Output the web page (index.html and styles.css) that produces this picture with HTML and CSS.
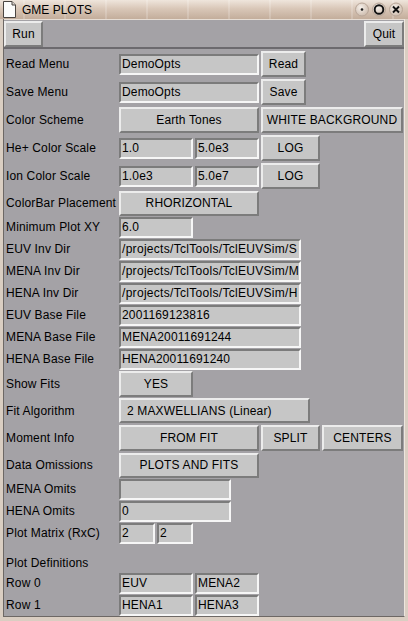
FILE: index.html
```html
<!DOCTYPE html>
<html lang="en">
<head>
    <meta charset="UTF-8">
    <title>GME PLOTS</title>
    <link rel="stylesheet" href="styles.css">
</head>
<body>
    <div class="window">
        <!-- Title bar -->
        <div class="titlebar">
            <svg class="app-icon" width="15" height="17" viewBox="0 0 15 17">
                <path d="M1.5 0.5 H10 L13.5 4 V16.5 H1.5 Z" fill="#fbfbfa" stroke="#4a4440"/>
                <path d="M10 0.5 V4 H13.5" fill="#dcd6d0" stroke="#4a4440"/>
            </svg>
            <span class="title">GME PLOTS</span>
            <svg class="wm-buttons" width="50" height="15" viewBox="0 0 50 15">
                <defs>
                    <radialGradient id="knob" cx="40%" cy="35%" r="70%">
                        <stop offset="0" stop-color="#f6f0ea"/>
                        <stop offset="1" stop-color="#cbb9aa"/>
                    </radialGradient>
                </defs>
                <circle cx="8" cy="7.5" r="6.5" fill="url(#knob)" stroke="#b8a698"/>
                <circle cx="8" cy="7.5" r="1.3" fill="#1a1a1a"/>
                <circle cx="25" cy="7.5" r="6.5" fill="url(#knob)" stroke="#b8a698"/>
                <circle cx="25" cy="7.5" r="4.3" fill="none" stroke="#111" stroke-width="1.9"/>
                <circle cx="42" cy="7.5" r="6.5" fill="url(#knob)" stroke="#b8a698"/>
                <path d="M39 4.5 L45 10.5 M45 4.5 L39 10.5" stroke="#111" stroke-width="1.9"/>
            </svg>
        </div>

        <div class="client">
            <!-- Toolbar -->
            <div class="toolbar">
                <button class="btn run">Run</button>
                <button class="btn quit">Quit</button>
            </div>

            <!-- Options form -->
            <div class="form">
                <div class="row tall">
                    <span class="label">Read Menu</span>
                    <div class="entry w140">DemoOpts</div>
                    <button class="btn w45">Read</button>
                </div>
                <div class="row tall">
                    <span class="label">Save Menu</span>
                    <div class="entry w140">DemoOpts</div>
                    <button class="btn w45">Save</button>
                </div>
                <div class="row tall">
                    <span class="label">Color Scheme</span>
                    <button class="btn w140">Earth Tones</button>
                    <button class="btn w142">WHITE BACKGROUND</button>
                </div>
                <div class="row tall">
                    <span class="label">He+ Color Scale</span>
                    <div class="entry w74">1.0</div>
                    <div class="entry w64">5.0e3</div>
                    <button class="btn w59">LOG</button>
                </div>
                <div class="row tall">
                    <span class="label">Ion Color Scale</span>
                    <div class="entry w74">1.0e3</div>
                    <div class="entry w64">5.0e7</div>
                    <button class="btn w59">LOG</button>
                </div>
                <div class="row h26">
                    <span class="label">ColorBar Placement</span>
                    <button class="btn short w140">RHORIZONTAL</button>
                </div>
                <div class="row">
                    <span class="label">Minimum Plot XY</span>
                    <div class="entry w74">6.0</div>
                </div>
                <div class="row">
                    <span class="label">EUV Inv Dir</span>
                    <div class="entry w182 path">/projects/TclTools/TclEUVSim/S</div>
                </div>
                <div class="row">
                    <span class="label">MENA Inv Dir</span>
                    <div class="entry w182 path">/projects/TclTools/TclEUVSim/M</div>
                </div>
                <div class="row">
                    <span class="label">HENA Inv Dir</span>
                    <div class="entry w182 path">/projects/TclTools/TclEUVSim/H</div>
                </div>
                <div class="row">
                    <span class="label">EUV Base File</span>
                    <div class="entry w182">2001169123816</div>
                </div>
                <div class="row">
                    <span class="label">MENA Base File</span>
                    <div class="entry w182">MENA20011691244</div>
                </div>
                <div class="row">
                    <span class="label">HENA Base File</span>
                    <div class="entry w182">HENA20011691240</div>
                </div>
                <div class="row h27">
                    <span class="label">Show Fits</span>
                    <button class="btn w74">YES</button>
                </div>
                <div class="row h27">
                    <span class="label">Fit Algorithm</span>
                    <button class="btn short w191 left">2 MAXWELLIANS (Linear)</button>
                </div>
                <div class="row tall">
                    <span class="label">Moment Info</span>
                    <button class="btn w140">FROM FIT</button>
                    <button class="btn w59">SPLIT</button>
                    <button class="btn w81">CENTERS</button>
                </div>
                <div class="row h26">
                    <span class="label">Data Omissions</span>
                    <button class="btn short w140">PLOTS AND FITS</button>
                </div>
                <div class="row">
                    <span class="label">MENA Omits</span>
                    <div class="entry w112"></div>
                </div>
                <div class="row">
                    <span class="label">HENA Omits</span>
                    <div class="entry w112">0</div>
                </div>
                <div class="row">
                    <span class="label">Plot Matrix (RxC)</span>
                    <div class="entry w36">2</div>
                    <div class="entry w36">2</div>
                </div>

                <div class="spacer"></div>
                <div class="row caption">
                    <span class="label">Plot Definitions</span>
                </div>
                <div class="row">
                    <span class="label">Row 0</span>
                    <div class="entry w74">EUV</div>
                    <div class="entry w64">MENA2</div>
                </div>
                <div class="row">
                    <span class="label">Row 1</span>
                    <div class="entry w74">HENA1</div>
                    <div class="entry w64">HENA3</div>
                </div>
            </div>
        </div>
    </div>
</body>
</html>
```

FILE: styles.css
```css
/* Global */
* {
    box-sizing: border-box;
}

html, body {
    margin: 0;
    padding: 0;
}

body {
    width: 408px;
    height: 621px;
    overflow: hidden;
    background: #dacec2; /* window frame */
    font-family: "Liberation Sans", Arial, sans-serif;
    font-size: 12px;
    letter-spacing: 0.15px;
    color: #000;
}

/* Title bar */
.titlebar {
    height: 19px;
    display: flex;
    align-items: center;
    padding-left: 2px;
    background:
        repeating-linear-gradient(90deg, rgba(255, 255, 255, 0) 0 23px, rgba(255, 255, 255, 0.18) 23px 25px, rgba(255, 255, 255, 0) 25px 41px),
        linear-gradient(#efe5dc, #d9c7b8 45%, #c3ad9b);
}

.app-icon {
    flex: none;
}

.title {
    margin-left: 5px;
    font-size: 12px;
    letter-spacing: 0;
}

.wm-buttons {
    margin-left: auto;
    margin-right: 4px;
}

/* Client area */
.client {
    margin: 0 3px;
    height: 598px;
    background: #a4a2a6;
    border-left: 1px solid #6d6865;
    border-right: 1px solid #eee6de;
    border-bottom: 1px solid #6d6865;
}

.toolbar {
    display: flex;
    justify-content: space-between;
    height: 30px;
    padding-top: 1px;
    border-top: 1px solid #e6ddd4;
    border-bottom: 2px solid #6c6a6e;
}

.toolbar .run {
    width: 39px;
}

.toolbar .quit {
    width: 40px;
}

/* Form rows */
.form {
    padding-top: 1px;
}

.row {
    display: flex;
    align-items: center;
    gap: 2px;
    height: 22px;
}

.row.tall {
    height: 28px;
}

.row.h27 {
    height: 27px;
}

.row.h26 {
    height: 26px;
}

.row.caption {
    height: 18px;
}

.spacer {
    height: 10px;
}

.label {
    flex: none;
    width: 113px;
    padding-left: 2px;
    white-space: nowrap;
}

/* Widgets */
.entry {
    flex: none;
    height: 21px;
    padding-left: 1px;
    line-height: 17px;
    background: #c6c6c6;
    border: 2px solid;
    border-color: #7b7b7b #f6f6f6 #f6f6f6 #7b7b7b;
    white-space: nowrap;
    overflow: hidden;
}

/* long directory paths scroll past the entry's right edge */
.entry.path {
    letter-spacing: 0.3px;
}

.btn {
    flex: none;
    height: 26px;
    padding: 0;
    font: inherit;
    letter-spacing: inherit;
    color: #000;
    text-align: center;
    background: #c6c6c6;
    border: 2px solid;
    border-color: #ececec #7c7c7c #7c7c7c #ececec;
    border-radius: 0;
}

.btn.short {
    height: 25px;
}

.btn.left {
    text-align: left;
    padding-left: 6px;
}

.w36 { width: 36px; }
.w45 { width: 45px; }
.w59 { width: 59px; }
.w64 { width: 64px; }
.w74 { width: 74px; }
.w81 { width: 81px; }
.w112 { width: 112px; }
.w140 { width: 140px; }
.w142 { width: 142px; }
.w182 { width: 182px; }
.w191 { width: 191px; }
```
